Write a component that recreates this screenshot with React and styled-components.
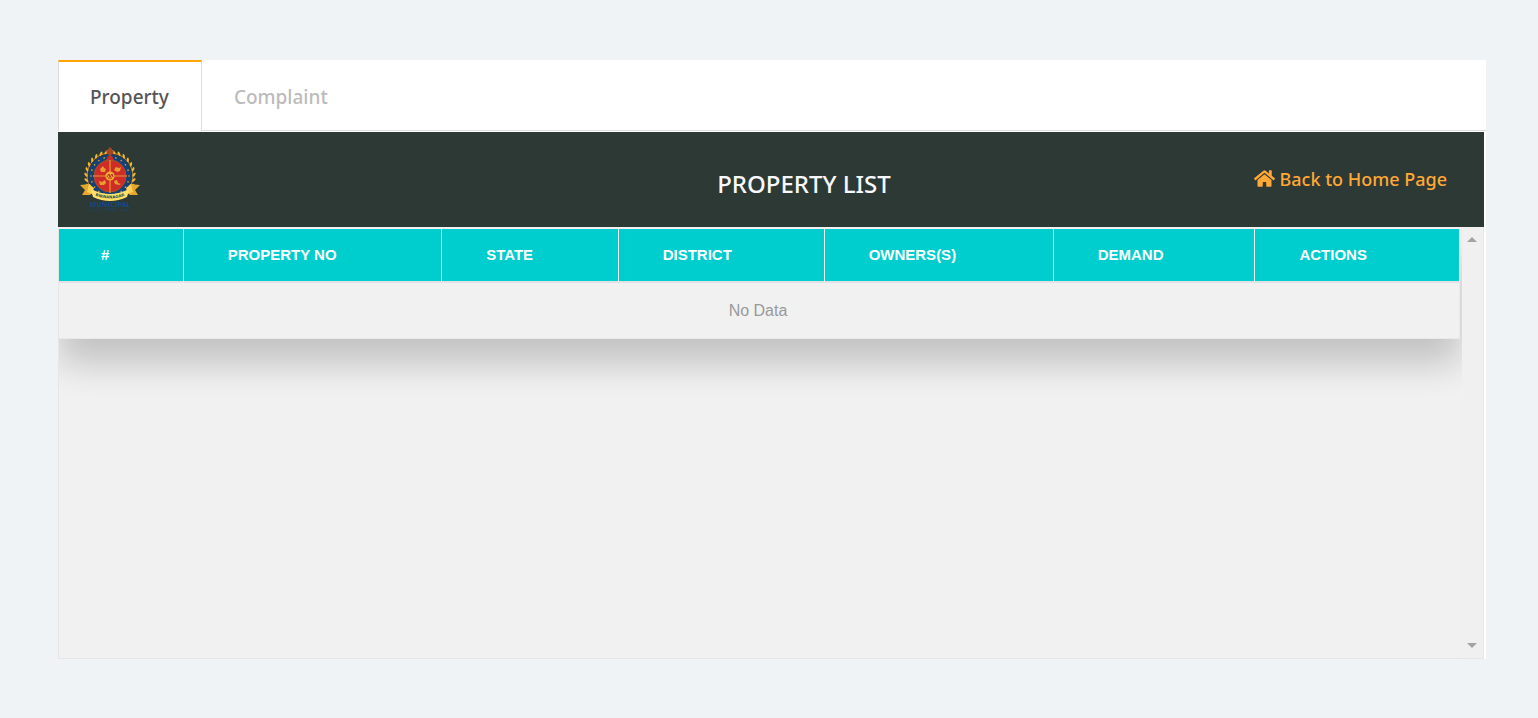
import { useState } from "react";
import styled, { createGlobalStyle } from "styled-components";
import { FaHome } from "react-icons/fa";

const GlobalStyle = createGlobalStyle`
  * {
    box-sizing: border-box;
  }
  body {
    margin: 0;
    background-color: #eff3f6;
    font-family: "Liberation Sans", Arial, sans-serif;
  }
`;

const Page = styled.main`
  padding: 60px 52px 59px 58px;
`;

const Panel = styled.section`
  padding-right: 2px;
  background-color: #fff;
`;

const Tabs = styled.div`
  display: flex;
  height: 71px;
  margin-right: -2px;
  margin-bottom: 1px;
  border-bottom: 1px solid #dcdcdf;
`;

const Tab = styled.button`
  height: 71px;
  padding: 0 32px 0 31px;
  border: 1px solid ${(props) => (props.$active ? "#dcdcdf" : "transparent")};
  border-top: 2px solid ${(props) => (props.$active ? "#ffa500" : "transparent")};
  border-bottom: 0;
  background-color: ${(props) => (props.$active ? "#fff" : "transparent")};
  color: ${(props) => (props.$active ? "#555" : "#bbb")};
  font-family: "Noto Sans", "Open Sans", sans-serif;
  font-size: 19px;
  font-weight: 500;
  cursor: pointer;
`;

const Header = styled.header`
  display: grid;
  grid-template-columns: 103px 1fr auto 1fr;
  align-items: center;
  height: 95px;
  padding-right: 37px;
  background-color: #2d3935;
  font-family: "Noto Sans", "Open Sans", sans-serif;
`;

const Emblem = styled.svg`
  width: 64px;
  height: 68px;
  margin-top: 3px;
  margin-left: 20px;
`;

const Title = styled.h1`
  grid-column: 3;
  margin: 0;
  padding-top: 8px;
  color: #f8f9ff;
  font-size: 24px;
  font-weight: 500;
`;

const HomeLink = styled.a`
  display: flex;
  align-items: center;
  justify-self: end;
  gap: 4px;
  padding-bottom: 2px;
  color: #ffa836;
  font-size: 18px;
  font-weight: 500;
  text-decoration: none;
  white-space: nowrap;
`;

const ScrollBox = styled.div`
  display: flex;
  height: calc(100vh - 286px);
  min-height: 200px;
  border: 1px solid #e6e6e6;
  border-top: 2px solid #f1f1f1;
  background-color: #f1f1f1;
`;

const Viewport = styled.div`
  flex: 1;
  overflow: hidden;
  padding-right: 2px;
`;

const Table = styled.table`
  width: 100%;
  border-collapse: separate;
  border-spacing: 0;
  table-layout: fixed;
  background-color: #f1f1f1;
  box-shadow: 0 24px 36px rgba(0, 0, 0, 0.2);
`;

const Col = styled.col`
  width: ${(props) => props.$width};
`;

const Th = styled.th`
  height: 54px;
  padding: 0 0 2px 44px;
  border-right: 1px solid #eef6f6;
  border-bottom: 2px solid #dee2e6;
  background-color: #00cdcd;
  color: #fff;
  font-size: 15px;
  font-weight: 700;
  text-align: left;

  &:first-child {
    padding-left: 42px;
  }
`;

const Empty = styled.td`
  height: 56px;
  padding: 0 2px 0 0;
  border-right: 1px solid #e9e9e9;
  border-bottom: 1px solid #e9e9e9;
  color: #999;
  font-size: 16px;
  text-align: center;
`;

const Rail = styled.div`
  display: flex;
  flex-direction: column;
  justify-content: space-between;
  width: 21px;
  padding-bottom: 2px;
  background-color: #f0f0f0;
`;

const Arrow = styled.button`
  display: flex;
  align-items: center;
  justify-content: center;
  height: 21px;
  padding: 0 1px 0 0;
  border: 0;
  background: none;

  &::before {
    content: "";
    border: 5px solid transparent;
    border-top: ${(props) => (props.$up ? "0" : "5px solid #a3a3a3")};
    border-bottom: ${(props) => (props.$up ? "5px solid #a3a3a3" : "0")};
  }
`;

const columns = [
  { label: "#", width: "8.9%" },
  { label: "PROPERTY NO", width: "18.45%" },
  { label: "STATE", width: "12.6%" },
  { label: "DISTRICT", width: "14.7%" },
  { label: "OWNERS(S)", width: "16.35%" },
  { label: "DEMAND", width: "14.4%" },
  { label: "ACTIONS", width: "14.6%" },
];

const leaves = [-142, -129, -116, -103, -90, -77, -64, -51, -38, -25, -12, 1];
const stars = Array.from({ length: 20 }, (_, i) => i * 18);

const Logo = () => (
  <Emblem viewBox="0 0 64 68" role="img" aria-label="Municipal emblem">
    {/* wreath */}
    <circle cx="32" cy="29" r="23" fill="none" stroke="#c98a2c" strokeWidth="1" />
    {leaves.map((angle) => (
      <g key={angle} fill="#f2b632">
        <ellipse
          cx="32"
          cy="5"
          rx="1.1"
          ry="2.4"
          transform={`rotate(${angle - 10} 32 29) rotate(50 32 5)`}
        />
        <ellipse
          cx="32"
          cy="5"
          rx="1.1"
          ry="2.4"
          transform={`rotate(${10 - angle} 32 29) rotate(-50 32 5)`}
        />
      </g>
    ))}
    <circle cx="32" cy="29" r="21.5" fill="#164174" />
    {stars.map((angle) => (
      <circle
        key={angle}
        cx="32"
        cy="10"
        r="0.8"
        fill="#d6a53a"
        transform={`rotate(${angle} 32 29)`}
      />
    ))}
    <circle cx="32" cy="29" r="16" fill="#cf2c28" stroke="#a6532c" strokeWidth="1" />
    <path d="M32 8V46M15 29H49" stroke="#e79a2e" strokeWidth="1.2" />
    <circle cx="32" cy="29" r="4.6" fill="#f2ab32" />
    <path d="M29 30l2-3 1 3 2-3 1 3M30 31h4" fill="none" stroke="#b52b22" strokeWidth="1" />
    <g fill="#eb9c31">
      <path d="M22 22l3-3 1 2 2 1-1 3h-4z" />
      <path d="M36 23l2-3 3 1 2-1-1 4-3 1z" />
      <path d="M21 34l3 1 3-2 1 3-2 2h-4z" />
      <path d="M36 34l3-1 1 3 3 1-2 1-4-1z" />
    </g>
    {/* crest */}
    <path d="M28 3l2 1V2l2-2 2 2v2l2-1-1 4-2 1v4h-2V8l-2-1z" fill="#a44524" />
    <path d="M30 9h4l2 4h-8z" fill="#c72e24" />
    {/* ribbon */}
    <path d="M2 38l10-1 3 8-3 3H4l3-5z" fill="#e4a82d" />
    <path d="M62 38l-10-1-3 8 3 3h8l-3-5z" fill="#e4a82d" />
    <path d="M11 37l5 4-2 6-5-2zM53 37l-5 4 2 6 5-2z" fill="#ffcf51" />
    <path d="M13 42q19 10 38 0l-2 8q-17 8-34 0z" fill="#ffe06a" />
    <path id="ribbon-line" d="M14 47.5q18 8 36 0" fill="none" />
    <text
      fill="#304d49"
      fontFamily="DejaVu Sans, sans-serif"
      fontSize="4"
      fontWeight="700"
      textAnchor="middle"
    >
      <textPath href="#ribbon-line" startOffset="50%">
        BIRNANAGAR
      </textPath>
    </text>
    <text x="32" y="60" fill="#144987" fontSize="7" fontWeight="700" textAnchor="middle">
      MUNICIPAL
    </text>
    <path d="M12 63h10M42 63h10" stroke="#174578" strokeWidth="0.6" />
    <text x="32" y="64" fill="#144987" fontSize="3" textAnchor="middle">
      COUNCIL
    </text>
  </Emblem>
);

const App = () => {
  const [active, setActive] = useState("Property");

  return (
    <>
      <GlobalStyle />
      <Page>
        <Panel>
          <Tabs role="tablist">
            {["Property", "Complaint"].map((name) => (
              <Tab
                key={name}
                type="button"
                role="tab"
                aria-selected={active === name}
                $active={active === name}
                onClick={() => setActive(name)}
              >
                {name}
              </Tab>
            ))}
          </Tabs>
          <Header>
            <Logo />
            <Title>PROPERTY LIST</Title>
            <HomeLink href="#home">
              <FaHome size={21} />
              Back to Home Page
            </HomeLink>
          </Header>
          <ScrollBox>
            <Viewport>
              <Table>
                <colgroup>
                  {columns.map(({ label, width }) => (
                    <Col key={label} $width={width} />
                  ))}
                </colgroup>
                <thead>
                  <tr>
                    {columns.map(({ label }) => (
                      <Th key={label} scope="col">
                        {label}
                      </Th>
                    ))}
                  </tr>
                </thead>
                <tbody>
                  <tr>
                    <Empty colSpan={columns.length}>No Data</Empty>
                  </tr>
                </tbody>
              </Table>
            </Viewport>
            <Rail>
              <Arrow type="button" $up aria-label="Scroll up" />
              <Arrow type="button" aria-label="Scroll down" />
            </Rail>
          </ScrollBox>
        </Panel>
      </Page>
    </>
  );
};

export default App;
